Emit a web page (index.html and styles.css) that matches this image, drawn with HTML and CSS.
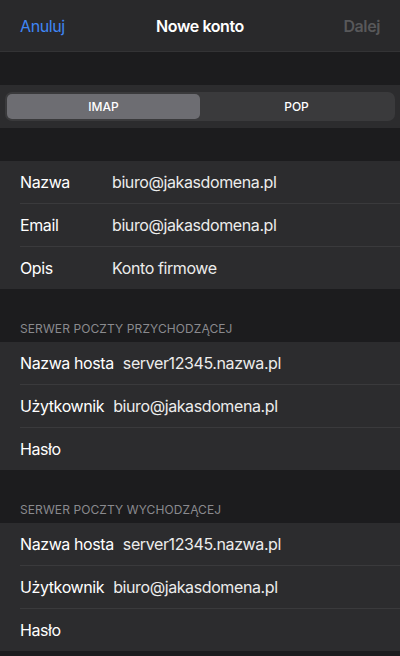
FILE: index.html
```html
<!DOCTYPE html>
<html lang="pl">
<head>
    <meta charset="UTF-8">
    <title>Nowe konto</title>
    <link rel="stylesheet" href="styles.css">
</head>
<body>
<div id="screen">
    <div class="nav">
        <span class="nav_left">Anuluj</span>
        <span class="nav_title">Nowe konto</span>
        <span class="nav_right">Dalej</span>
    </div>

    <div class="gap"></div>

    <div class="segment_band">
        <div class="segment">
            <span class="seg_item active">IMAP</span>
            <span class="seg_item">POP</span>
        </div>
    </div>

    <div class="gap"></div>

    <ul class="group wide">
        <li><span class="label">Nazwa</span><span class="value">biuro@jakasdomena.pl</span></li>
        <li><span class="label">Email</span><span class="value">biuro@jakasdomena.pl</span></li>
        <li><span class="label">Opis</span><span class="value">Konto firmowe</span></li>
    </ul>

    <div class="section_title">SERWER POCZTY PRZYCHODZĄCEJ</div>
    <ul class="group">
        <li><span class="label">Nazwa hosta</span><span class="value">server12345.nazwa.pl</span></li>
        <li><span class="label">Użytkownik</span><span class="value">biuro@jakasdomena.pl</span></li>
        <li><span class="label">Hasło</span><span class="value"></span></li>
    </ul>

    <div class="section_title">SERWER POCZTY WYCHODZĄCEJ</div>
    <ul class="group">
        <li><span class="label">Nazwa hosta</span><span class="value">server12345.nazwa.pl</span></li>
        <li><span class="label">Użytkownik</span><span class="value">biuro@jakasdomena.pl</span></li>
        <li><span class="label">Hasło</span><span class="value"></span></li>
    </ul>
</div>
</body>
</html>
```

FILE: styles.css
```css
*{
    margin: 0;
    padding: 0;
    list-style: none;
    border: none;
    box-sizing: border-box;
}
html, body{
    background-color: #1c1c1e;
}
body{
    font-family: Inter, "Noto Sans", sans-serif;
    color: #ffffff;
    width: 400px;
    height: 656px;
    overflow: hidden;
}
#screen{
    width: 400px;
}

/* pasek nawigacji */
.nav{
    height: 52px;
    background-color: #29292b;
    border-bottom: 1px solid #333335;
    display: flex;
    align-items: center;
    justify-content: space-between;
    padding: 0 20px;
    position: relative;
    font-size: 16px;
    letter-spacing: -0.4px;
}
.nav_left{
    color: #3f86f5;
}
.nav_title{
    font-weight: 600;
    position: absolute;
    left: 0;
    right: 0;
    text-align: center;
    pointer-events: none;
}
.nav_right{
    color: #58585a;
    font-weight: 600;
}

.gap{
    height: 33px;
}

/* przełącznik IMAP / POP */
.segment_band{
    height: 43px;
    background-color: #2c2c2e;
    padding: 7px 5px;
}
.segment{
    height: 29px;
    background-color: #3a3a3c;
    border-radius: 7px;
    padding: 2px;
    display: flex;
}
.seg_item{
    flex: 1;
    display: flex;
    align-items: center;
    justify-content: center;
    font-size: 12px;
    font-weight: 500;
    border-radius: 5px;
}
.seg_item.active{
    background-color: #6d6d72;
}

/* grupy pól */
.group{
    background-color: #2c2c2e;
}
.group li{
    height: 43px;
    display: flex;
    align-items: center;
    margin-left: 20px;
    border-bottom: 1px solid #3a3a3c;
    font-size: 16px;
    letter-spacing: -0.4px;
    gap: 9px;
}
.group li:last-child{
    height: 42px;
    border-bottom: none;
}
.label{
    min-width: 83px;
    color: #ffffff;
}
.value{
    color: #ececec;
}

.section_title{
    height: 53px;
    padding: 0 20px 6px;
    display: flex;
    align-items: flex-end;
    font-size: 12px;
    color: #8a8a8e;
    letter-spacing: 0.1px;
}
```
